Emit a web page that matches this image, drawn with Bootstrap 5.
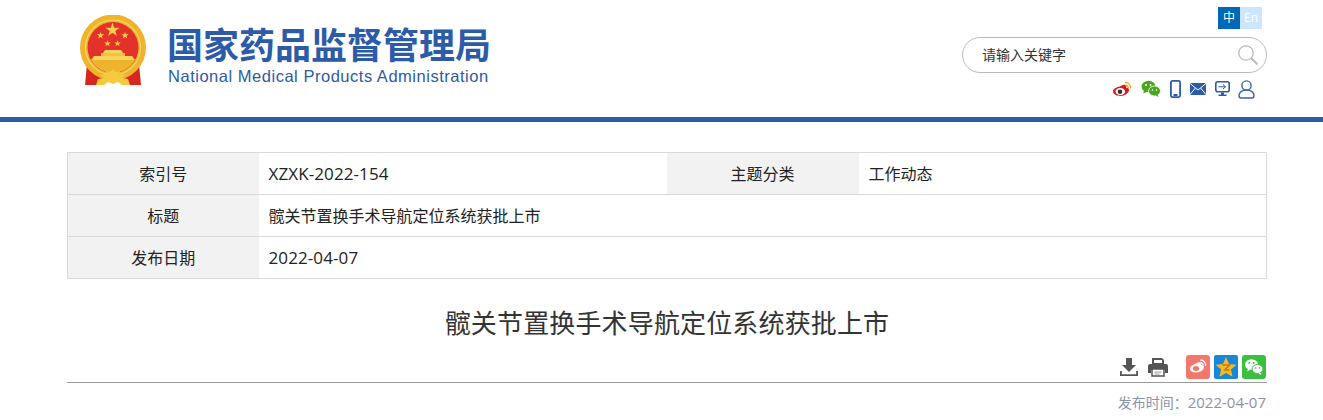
<!DOCTYPE html>
<html lang="zh-CN">
<head>
<meta charset="utf-8">
<title>髋关节置换手术导航定位系统获批上市</title>
<link href="https://cdn.jsdelivr.net/npm/bootstrap@5.3.0/dist/css/bootstrap.min.css" rel="stylesheet">
<style>
body{font-family:"Open Sans","Noto Sans CJK SC",sans-serif;color:#333;background:#fff;overflow:hidden}
.wrap{width:1200px;margin-left:67px}
.site-head{height:122px;border-bottom:5px solid #2c5ba8}
.head-in{height:117px}
.brand{padding:15px 0 0 12px;gap:20px}
.brand-cn{font-family:"Noto Sans CJK SC",sans-serif;font-weight:700;font-size:36px;line-height:42px;color:#2c5ba8;margin-top:7px;white-space:nowrap}
.brand-en{font-family:"Liberation Sans",sans-serif;font-size:16.5px;line-height:20px;letter-spacing:.52px;color:#2c5ba8;margin:2px 0 0 1px;white-space:nowrap}
.head-right{width:305px;padding-top:7px}
.lang{margin-right:5px}
.lang span{width:22px;height:22px;line-height:22px;font-size:12px;text-align:center;display:block;color:#fff}
.lang-on{background:#0068b7}
.lang-off{background:#cce6ff}
.search-box{height:36px;margin-top:8px;border:1px solid #bbb;border-radius:18px;padding:0 7px 0 19px}
.search-box span{font-size:14px;line-height:34px;color:#333}
.tools{margin-top:6px;height:20px;padding-right:12px}
.tools svg{margin-left:9px}
.meta-table{width:1199px;table-layout:fixed;margin:30px 0 0;border-collapse:collapse;font-size:16px;color:#222}
.meta-table td{height:42px;border:1px solid #d9d9d9;padding:0 0 0 10px;vertical-align:middle}
.meta-table td.lab{background:#f2f2f2;text-align:center;padding:0;border-left:1px solid #d9d9d9;border-right:0}
.meta-table td.val{border-left:0;border-right:0}
.meta-table td.end{border-right:1px solid #d9d9d9}
.meta-table td.mid{border-left:0}
.num{font-size:17px;letter-spacing:.1px}
.art-title{font-family:"Noto Sans CJK SC",sans-serif;font-weight:400;font-size:26px;letter-spacing:.15px;line-height:36px;text-align:center;color:#333;margin:25px 0 0}
.art-tools{height:25px;margin-top:14px;padding-right:1px}
.art-rule{height:1px;background:#999;margin-top:3px}
.art-date{font-size:14px;line-height:20px;color:#8a93a5;text-align:right;margin-top:9px;padding-right:1px}
.art-date span{font-size:15px}
.tool-gap{margin-left:10px}
.share-first{margin-left:18px}
</style>
</head>
<body>
<header class="site-head">
<div class="wrap d-flex justify-content-between head-in">
  <div class="d-flex brand">
    <svg width="68" height="72" viewBox="0 0 68 72" aria-label="国徽">
      <defs><path id="st" d="M0-1 .225-.309.951-.309.363.118.588.809 0 .382-.588.809-.363.118-.951-.309-.225-.309Z"/></defs>
      <path d="M8 49 L6 70 L22 70 L27 62 L41 62 L46 70 L62 70 L60 49 L50 58 L18 58Z" fill="#d8261f"/>
      <circle cx="34" cy="32.500" r="33" fill="#eeb52c"/>
      <circle cx="34" cy="32.500" r="27.500" fill="none" stroke="#f8d668" stroke-width="1.200"/>
      <circle cx="34" cy="32.500" r="25.500" fill="#e4312a"/>
      <path d="M12 45 H56 A25.500 25.500 0 0 1 12 45Z" fill="#eeb52c"/>
      <path d="M12 45 L15 41 H53 L56 45Z" fill="#f9d35c"/>
      <path d="M22 41 V38 H46 V41Z" fill="#f4c23d"/>
      <path d="M24 38 L26 35 H42 L44 38Z" fill="#f9d35c"/>
      <path d="M34 54 l-3 3 -4-1 1 3 -6 1 3 3 -6 1 -2 6 h8 l4-3 5 2 5-2 4 3 h8 l-2-6 -6-1 3-3 -6-1 1-3 -4 1Z" fill="#f6c93f"/>
      <g fill="#f8d24a">
        <use href="#st" transform="translate(33.500 15) scale(7.500)"/>
        <use href="#st" transform="translate(21.500 20.500) scale(3.800)"/>
        <use href="#st" transform="translate(46 20.500) scale(3.800)"/>
        <use href="#st" transform="translate(28.500 28.500) scale(3.500)"/>
        <use href="#st" transform="translate(38.500 28.500) scale(3.500)"/>
      </g>
    </svg>
    <div>
      <div class="brand-cn">国家药品监督管理局</div>
      <div class="brand-en">National Medical Products Administration</div>
    </div>
  </div>
  <div class="head-right">
    <div class="d-flex justify-content-end"><div class="d-flex lang"><span class="lang-on">中</span><span class="lang-off">En</span></div></div>
    <div class="search-box d-flex justify-content-between align-items-center">
      <span>请输入关键字</span>
      <svg width="22" height="22" viewBox="0 0 22 22" fill="none" stroke="#bbb"><circle cx="9" cy="9" r="7.200" stroke-width="1.300"/><path d="M14 14 L20.500 20.500" stroke-width="2"/></svg>
    </div>
    <div class="d-flex justify-content-end align-items-center tools">
      <svg width="20" height="18" viewBox="0 0 20 18"><path d="M8 6.500c3-2 5-2 6-1 .5.800.3 1.500.1 2.200 2-.3 2.900.8 2.900 2.100 0 3-4.200 6.200-8.600 6.200C4.500 16 1 14.200 1 11.300 1 9.500 3.600 7.300 8 6.500Z" fill="#e0151b"/><ellipse cx="8.300" cy="11.500" rx="4.800" ry="3.500" fill="#fff"/><circle cx="8" cy="11.700" r="2.300" fill="#333"/><path d="M13 2.500a5 5 0 0 1 5.500 6M13.500 5.200a2.500 2.500 0 0 1 2.700 3" fill="none" stroke="#f0a818" stroke-width="1.300"/></svg>
      <svg width="20" height="18" viewBox="0 0 20 18"><ellipse cx="7.500" cy="6.500" rx="7" ry="5.800" fill="#4aa520"/><path d="M3 10l-.5 3.500 3.500-2z" fill="#4aa520"/><ellipse cx="13.500" cy="11" rx="6" ry="5" fill="#4aa520" stroke="#fff" stroke-width=".8"/><path d="M16.500 14.500l1 2.500-3-1.500z" fill="#4aa520"/><circle cx="5" cy="5" r="1" fill="#fff"/><circle cx="9.500" cy="5" r="1" fill="#fff"/><circle cx="11.500" cy="10" r=".8" fill="#fff"/><circle cx="15.500" cy="10" r=".8" fill="#fff"/></svg>
      <svg width="11" height="18" viewBox="0 0 11 18"><rect x=".9" y=".9" width="9.200" height="16.200" rx="1.500" fill="none" stroke="#2c5ba8" stroke-width="1.800"/><rect x="3.500" y="14" width="4" height="2" fill="#2c5ba8"/></svg>
      <svg width="16" height="12" viewBox="0 0 16 12"><rect width="16" height="12" rx="1" fill="#2c5ba8"/><path d="M0 .5 8 7l8-6.500M0 11.500 5.500 5M16 11.500 10.500 5" fill="none" stroke="#fff" stroke-width="1"/></svg>
      <svg width="15" height="16" viewBox="0 0 15 16"><rect x=".8" y=".8" width="13.400" height="10" rx="2" fill="none" stroke="#2c5ba8" stroke-width="1.600"/><path d="M3.500 5.800h7M8 3.500l2.500 2.300L8 8" fill="none" stroke="#2c5ba8" stroke-width="1"/><path d="M6 11.500h3v2h2.500v1.500h-8V13.500H6z" fill="#2c5ba8"/></svg>
      <svg width="17" height="19" viewBox="0 0 17 19" class="ms-2" fill="none" stroke="#3a62ad" stroke-width="1.400"><circle cx="8.500" cy="5.500" r="4.600"/><path d="M8.500 10C4 10 1 12.500 1 15.500c0 1.500 1 2.500 2 2.500h11c1 0 2-1 2-2.500 0-3-3-5.500-7.500-5.500Z"/></svg>
    </div>
  </div>
</div>
</header>
<main class="wrap">
  <table class="meta-table">
    <colgroup><col style="width:191px"><col style="width:408px"><col style="width:192px"><col style="width:408px"></colgroup>
    <tr><td class="lab">索引号</td><td class="val"><span class="num">XZXK-2022-154</span></td><td class="lab mid">主题分类</td><td class="val end">工作动态</td></tr>
    <tr><td class="lab">标题</td><td class="val end" colspan="3">髋关节置换手术导航定位系统获批上市</td></tr>
    <tr><td class="lab">发布日期</td><td class="val end" colspan="3"><span class="num">2022-04-07</span></td></tr>
  </table>
  <h1 class="art-title">髋关节置换手术导航定位系统获批上市</h1>
  <div class="d-flex justify-content-end align-items-center art-tools">
    <svg width="18" height="18" viewBox="0 0 18 18" fill="#555"><path d="M6 0h6v7h4l-7 7-7-7h4z"/><path d="M0 13v5h18v-5h-1.800v3.200H1.800V13z"/></svg>
    <svg width="20" height="20" viewBox="0 0 20 20" class="tool-gap"><path d="M4 1h10l2 2v4H4z" fill="#555"/><rect x="6" y="3" width="8" height="3" fill="#fff"/><path d="M2 7h16a2 2 0 0 1 2 2v7h-3v-3H3v3H0V9a2 2 0 0 1 2-2Z" fill="#555"/><rect x="4" y="12" width="12" height="7" fill="#fff" stroke="#555" stroke-width="1.500"/><path d="M6.500 15h7M6.500 17h5" stroke="#999"/></svg>
    <svg width="24" height="24" viewBox="0 0 24 24" class="share-first"><rect width="24" height="24" rx="3" fill="#f4776b"/><path d="M9 9c3-2 5-2 6-1 .5.700.3 1.400.1 2 2-.2 2.900.8 2.900 2 0 3-4 5.500-8 5.500-3.500 0-6-1.600-6-4C4 12 6 10 9 9Z" fill="#fff"/><ellipse cx="10" cy="13.500" rx="3.200" ry="2.500" fill="#f4776b"/><path d="M14.500 5a5 5 0 0 1 5 6M14.500 7.500a2.500 2.500 0 0 1 2.500 3" fill="none" stroke="#fff" stroke-width="1.300"/></svg>
    <svg width="24" height="24" viewBox="0 0 24 24" class="ms-1"><rect width="24" height="24" rx="2" fill="#1787dc"/><path d="M12 2l3 7 7.500.7-5.600 4.800 1.700 7.300-6.600-3.900-6.600 3.900 1.700-7.300L1.500 9.700 9 9z" fill="#f6b91e"/><path d="M8.500 10h7l-4.500 5h4.500" fill="none" stroke="#c9781c" stroke-width="1.600"/></svg>
    <svg width="24" height="24" viewBox="0 0 24 24" class="ms-1"><rect width="24" height="24" rx="3" fill="#3bbf3f"/><ellipse cx="9.500" cy="9.500" rx="6.500" ry="5.300" fill="#fff"/><path d="M6 13.500l-.8 3 3-1.700z" fill="#fff"/><ellipse cx="15.500" cy="14" rx="5.500" ry="4.500" fill="#fff" stroke="#3bbf3f"/><path d="M18.500 17.500l.8 2.500-3-1.500z" fill="#fff"/><circle cx="7.300" cy="8" r="1" fill="#3bbf3f"/><circle cx="11.700" cy="8" r="1" fill="#3bbf3f"/><circle cx="13.500" cy="13" r=".8" fill="#3bbf3f"/><circle cx="17.500" cy="13" r=".8" fill="#3bbf3f"/></svg>
  </div>
  <div class="art-rule"></div>
  <div class="art-date">发布时间：<span>2022-04-07</span></div>
</main>
</body>
</html>
